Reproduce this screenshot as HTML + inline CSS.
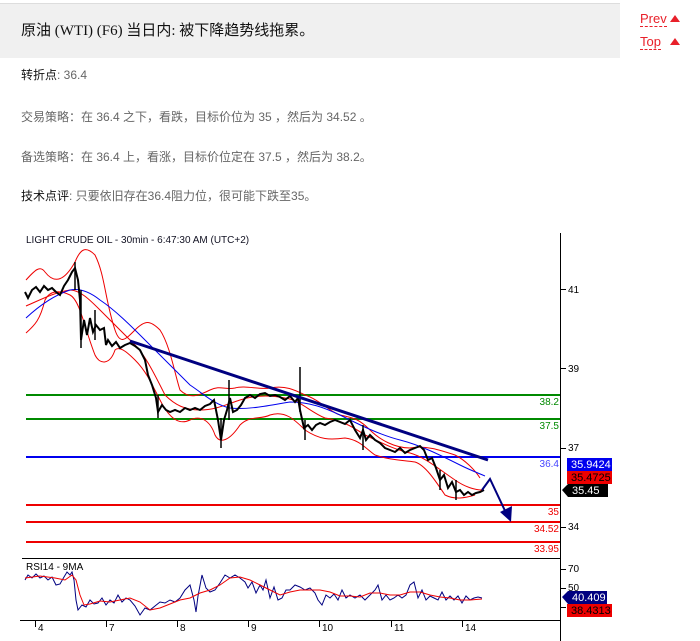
<!DOCTYPE html>
<html><head><meta charset="utf-8"><style>
body{margin:0;width:700px;height:641px;background:#fff;font-family:"Liberation Sans","Noto Sans CJK SC",sans-serif;position:relative;overflow:hidden}
.hdr{position:absolute;left:0;top:3px;width:620px;height:54px;background:#f0f0f0;border-top:1px solid #ddd}
.hdr div{position:absolute;left:21px;top:15px;font-size:15px;color:#111;font-family:"Liberation Serif","Noto Sans CJK SC",serif}
.nav{position:absolute;left:640px;font-size:13px;color:#e8202a;border-bottom:1px dashed #e8202a;line-height:14px}
.tri{position:absolute;left:670px;width:0;height:0;border-left:5px solid transparent;border-right:5px solid transparent;border-bottom:7px solid #e8202a}
.t{position:absolute;left:21px;font-size:12px;color:#666}
.t b{font-weight:normal;color:#111}
</style></head><body>
<div class="hdr"><div>原油 (WTI) (F6) 当日内: 被下降趋势线拖累。</div></div>
<div class="nav" style="top:12px">Prev</div><div class="tri" style="top:15px"></div>
<div class="nav" style="top:35px">Top</div><div class="tri" style="top:38px"></div>
<div class="t" style="top:66px"><b>转折点</b>: 36.4</div>
<div class="t" style="top:108px">交易策略：在 36.4 之下，看跌，目标价位为 35 ，然后为 34.52 。</div>
<div class="t" style="top:148px">备选策略：在 36.4 上，看涨，目标价位定在 37.5 ，然后为 38.2。</div>
<div class="t" style="top:187px"><b>技术点评</b>: 只要依旧存在36.4阻力位，很可能下跌至35。</div>
<svg style="position:absolute;left:0;top:0" width="700" height="641" font-family="Liberation Sans,sans-serif">
<text x="26" y="243" font-size="10" fill="#112">LIGHT CRUDE OIL - 30min - 6:47:30 AM (UTC+2)</text>
<line x1="560.5" y1="233" x2="560.5" y2="641" stroke="#000"/>
<line x1="22" y1="558.5" x2="560" y2="558.5" stroke="#000"/>
<line x1="20" y1="620.5" x2="560" y2="620.5" stroke="#000"/>
<g stroke="#000"><line x1="560" y1="289.5" x2="566" y2="289.5"/><line x1="560" y1="368.5" x2="566" y2="368.5"/><line x1="560" y1="448.5" x2="566" y2="448.5"/><line x1="560" y1="527.5" x2="566" y2="527.5"/><line x1="560" y1="569.5" x2="566" y2="569.5"/><line x1="560" y1="588.5" x2="566" y2="588.5"/><line x1="560" y1="607.5" x2="566" y2="607.5"/>
<line x1="35.5" y1="620" x2="35.5" y2="627"/><line x1="106.5" y1="620" x2="106.5" y2="627"/><line x1="177.5" y1="620" x2="177.5" y2="627"/><line x1="248.5" y1="620" x2="248.5" y2="627"/><line x1="319.5" y1="620" x2="319.5" y2="627"/><line x1="391.5" y1="620" x2="391.5" y2="627"/><line x1="462.5" y1="620" x2="462.5" y2="627"/></g>
<g font-size="10" fill="#000"><text x="568" y="293">41</text><text x="568" y="372">39</text><text x="568" y="451">37</text><text x="568" y="530">34</text><text x="568" y="572">70</text><text x="568" y="591">50</text>
<text x="38" y="631">4</text><text x="109" y="631">7</text><text x="180" y="631">8</text><text x="251" y="631">9</text><text x="322" y="631">10</text><text x="394" y="631">11</text><text x="465" y="631">14</text></g>
<g stroke-width="2"><line x1="26" y1="395" x2="560" y2="395" stroke="#008a00"/><line x1="26" y1="419" x2="560" y2="419" stroke="#008a00"/><line x1="26" y1="457" x2="560" y2="457" stroke="#0000ee"/><line x1="26" y1="505" x2="560" y2="505" stroke="#ee0000"/><line x1="26" y1="522" x2="560" y2="522" stroke="#ee0000"/><line x1="26" y1="542" x2="560" y2="542" stroke="#ee0000"/></g>
<g font-size="10"><text x="559" y="405" fill="#008a00" text-anchor="end">38.2</text><text x="559" y="429" fill="#008a00" text-anchor="end">37.5</text><text x="559" y="467" fill="#4444ff" text-anchor="end">36.4</text><text x="559" y="515" fill="#ee0000" text-anchor="end">35</text><text x="559" y="532" fill="#ee0000" text-anchor="end">34.52</text><text x="559" y="552" fill="#ee0000" text-anchor="end">33.95</text></g>
<g fill="none" stroke="#ee0000" stroke-width="1">
<path d="M26,280 C35,270 40,265 45,272 C55,285 65,280 75,262 C80,250 85,245 95,255 C105,275 105,300 115,330 C120,345 125,340 135,330 C145,320 150,320 160,330 C170,345 175,375 180,390 C190,400 200,395 210,390 C220,385 225,390 235,388 C245,385 260,390 270,388 C285,385 295,390 305,395 C320,400 330,412 340,415 C355,418 360,420 370,430 C380,440 395,448 410,448 C425,445 440,450 455,455 C465,460 475,470 480,478"/>
<path d="M26,333 C35,325 40,320 45,300 C50,290 60,290 70,295 C80,300 85,330 95,355 C100,365 110,365 115,350 C120,345 130,355 135,360 C145,370 150,380 160,400 C170,420 180,425 190,420 C200,415 210,420 215,435 C220,445 230,440 240,425 C250,415 260,420 270,415 C285,410 295,420 305,430 C320,440 330,440 345,438 C360,440 365,448 375,455 C390,460 400,460 415,462 C425,465 435,480 445,495 C455,500 465,498 475,495"/>
<path d="M26,306 C40,300 55,292 70,290 C80,290 90,300 100,310 C115,325 125,335 135,345 C145,355 155,375 165,395 C175,405 185,410 200,410 C215,410 225,405 240,400 C255,395 270,395 285,398 C300,400 310,412 325,418 C340,420 350,425 365,435 C380,442 395,450 410,453 C425,457 440,470 455,480 C465,487 475,490 482,490"/>
</g>
<path d="M26,318 C40,305 55,295 70,290 C80,288 90,292 100,300 C115,310 130,325 145,340 C160,355 175,370 190,385 C205,395 215,405 230,408 C250,410 270,405 290,402 C310,402 325,408 340,415 C360,425 380,435 400,440 C420,445 440,455 460,465 C470,470 478,473 485,476" fill="none" stroke="#0000ee" stroke-width="1"/>
<polyline fill="none" stroke="#000" stroke-width="2" points="25,292 28,298 32,290 36,287 40,292 44,286 48,290 52,288 56,292 60,295 64,286 68,280 72,272 75,268 78,280 80,300 81,340 84,320 87,335 90,318 93,332 96,325 100,330 104,328 106,345 108,340 112,346 116,342 120,348 125,345 130,343 135,346 140,350 145,360 148,375 152,385 156,398 158,412 162,405 166,410 170,412 175,410 180,412 185,408 190,410 195,408 200,410 205,406 210,404 214,400 218,420 221,440 224,420 227,410 230,398 233,412 237,410 241,405 245,398 250,395 255,398 260,394 265,393 270,396 275,395 280,397 285,400 290,396 295,402 298,398 300,410 304,428 308,425 312,430 316,425 320,423 325,425 330,422 335,420 340,422 345,424 350,420 355,430 360,438 363,430 366,440 370,435 375,440 380,443 385,448 390,450 395,452 400,448 405,453 410,450 415,448 420,446 424,450 428,460 432,458 436,468 440,480 444,475 448,488 452,482 456,492 460,490 464,495 468,492 472,495 476,493 480,492 484,490"/>
<g stroke="#000" stroke-width="1.5"><line x1="75" y1="262" x2="75" y2="290"/><line x1="81" y1="290" x2="81" y2="348"/><line x1="95" y1="310" x2="95" y2="340"/><line x1="158" y1="395" x2="158" y2="418"/><line x1="221" y1="418" x2="221" y2="448"/><line x1="229" y1="380" x2="229" y2="420"/><line x1="300" y1="367" x2="300" y2="412"/><line x1="305" y1="420" x2="305" y2="440"/><line x1="363" y1="425" x2="363" y2="450"/><line x1="440" y1="470" x2="440" y2="490"/><line x1="456" y1="480" x2="456" y2="500"/></g>
<line x1="130" y1="341" x2="488" y2="460" stroke="#000080" stroke-width="3"/>
<polyline points="482,490 490,479 507,515" fill="none" stroke="#000080" stroke-width="2"/>
<polygon points="500,512 512,506 511,522" fill="#000080"/>
<text x="26" y="570" font-size="10" fill="#000">RSI14 - 9MA</text>
<polyline fill="none" stroke="#000080" stroke-width="1" points="25,580 28,575 32,578 36,574 40,578 44,576 48,580 52,577 56,585 60,584 64,577 67,572 70,575 72,572 74,580 76,600 78,610 82,605 86,607 90,600 94,604 98,603 102,598 106,605 110,600 114,603 118,595 122,602 126,598 130,600 135,606 140,615 145,608 150,610 155,606 160,602 165,603 170,600 175,602 180,598 185,590 188,587 190,585 194,600 196,612 198,596 202,575 206,588 210,592 215,590 220,583 225,575 230,578 235,575 240,578 245,582 248,588 252,582 256,593 260,585 263,590 266,580 270,598 274,587 278,600 282,598 286,590 290,590 295,585 300,587 305,590 310,588 315,593 318,600 322,605 326,595 330,598 334,594 338,600 342,590 346,598 350,595 355,598 360,595 365,600 370,595 375,590 378,585 382,600 386,595 390,600 394,598 398,595 402,598 406,595 410,585 414,582 418,598 422,590 426,600 430,596 434,598 438,600 442,592 446,600 450,596 454,600 458,596 462,603 466,596 470,600 474,598 478,597 482,598"/>
<polyline fill="none" stroke="#ee0000" stroke-width="1" points="25,578 40,576 55,578 65,580 72,575 76,580 80,595 84,605 90,604 100,601 110,602 120,600 130,598 140,602 150,610 160,608 170,604 180,600 190,598 200,593 210,590 220,585 230,578 240,577 250,580 260,585 270,590 280,595 290,592 300,590 310,590 320,590 330,592 340,596 350,596 360,597 370,593 380,593 390,595 400,595 410,592 420,592 430,595 440,597 450,598 460,600 470,600 482,599"/>
<rect x="567" y="458" width="45" height="13" fill="#0000ee"/><text x="571" y="468" font-size="11" fill="#fff">35.9424</text>
<rect x="567" y="471" width="45" height="13" fill="#ee0000"/><text x="571" y="481" font-size="11" fill="#000">35.4725</text>
<polygon points="562,490 568,484 608,484 608,497 568,497" fill="#000"/><text x="572" y="494" font-size="11" fill="#fff">35.45</text>
<polygon points="562,597 568,591 607,591 607,604 568,604" fill="#000080"/><text x="572" y="601" font-size="11" fill="#fff">40.409</text>
<rect x="567" y="604" width="45" height="13" fill="#ee0000"/><text x="571" y="614" font-size="11" fill="#000">38.4313</text>
</svg>
</body></html>
